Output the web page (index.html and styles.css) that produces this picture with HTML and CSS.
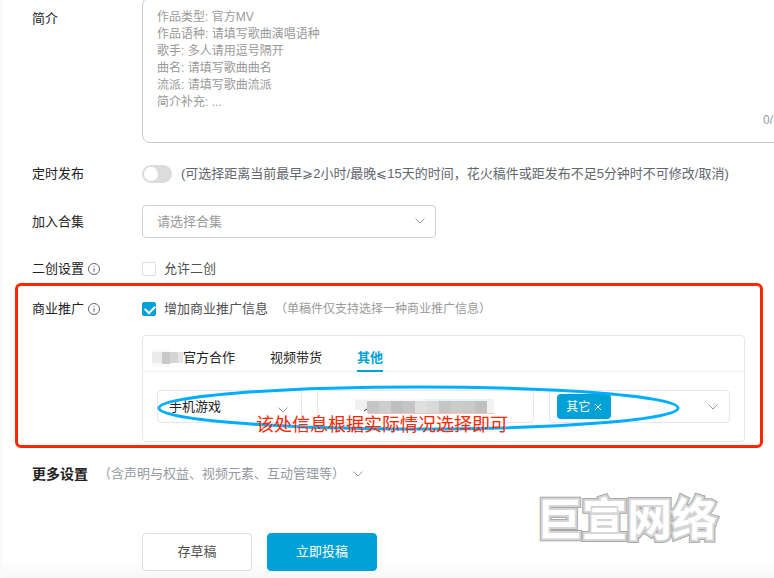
FILE: index.html
```html
<!DOCTYPE html>
<html lang="zh-CN">

<head>
  <meta charset="utf-8">
  <title>投稿</title>
  <link rel="stylesheet" href="styles.css">
</head>

<body>
  <main class="page">
    <form>
      <div class="row row-desc">
        <label class="label" for="desc">简介</label>
        <div class="desc">
          <textarea id="desc" class="desc-input" placeholder="作品类型: 官方MV&#10;作品语种: 请填写歌曲演唱语种&#10;歌手: 多人请用逗号隔开&#10;曲名: 请填写歌曲曲名&#10;流派: 请填写歌曲流派&#10;简介补充: ..."></textarea>
          <span class="desc-count">0/</span>
        </div>
      </div>

      <div class="row">
        <label class="label" for="timer">定时发布</label>
        <div class="line">
          <input class="switch" id="timer" type="checkbox">
          <span class="tip">(可选择距离当前最早⩾2小时/最晚⩽15天的时间，花火稿件或距发布不足5分钟时不可修改/取消)</span>
        </div>
      </div>

      <div class="row">
        <label class="label" for="season">加入合集</label>
        <div class="select-box season">
          <select class="select placeholder" id="season">
            <option>请选择合集</option>
          </select>
          <svg class="arrow" viewBox="0 0 10 6"><path d="M0.5 0.5L5 5L9.5 0.5"/></svg>
        </div>
      </div>

      <div class="row">
        <span class="label">二创设置
          <svg class="info" viewBox="0 0 12 12"><circle cx="6" cy="6" r="5.5"/><path d="M6 5.2V8.8M6 3.2V4.2"/></svg>
        </span>
        <div class="line">
          <input class="check" id="remix" type="checkbox">
          <label class="check-text" for="remix">允许二创</label>
        </div>
      </div>

      <section class="promo">
        <div class="row row-promo">
          <span class="label">商业推广
            <svg class="info" viewBox="0 0 12 12"><circle cx="6" cy="6" r="5.5"/><path d="M6 5.2V8.8M6 3.2V4.2"/></svg>
          </span>
          <div class="line">
            <input class="check" id="ad" type="checkbox" checked>
            <label class="check-text" for="ad">增加商业推广信息</label>
            <span class="hint">（单稿件仅支持选择一种商业推广信息）</span>
          </div>
        </div>

        <div class="panel">
          <div class="tabs">
            <button class="tab" type="button">
              <svg class="tab-mosaic" viewBox="0 0 31 18">
                <rect width="18" height="18" fill="#fafafa"/>
                <rect y="3" width="10" height="11" fill="#ececec"/>
                <rect x="10" y="3" width="8" height="12" fill="#c9c9c9"/>
                <rect x="18" y="3" width="8" height="11" fill="#d5d5d5"/>
                <rect x="26" y="3" width="5" height="11" fill="#e4e4e4"/>
              </svg>官方合作</button>
            <button class="tab" type="button">视频带货</button>
            <button class="tab active" type="button">其他</button>
          </div>
          <div class="fields">
            <div class="select-box">
              <select class="select select-type" aria-label="推广类型">
                <option>手机游戏</option>
              </select>
              <svg class="arrow arrow-type" viewBox="0 0 10 6"><path d="M0.5 0.5L5 5L9.5 0.5"/></svg>
            </div>
            <div class="select-box">
              <input class="field" type="text" aria-label="推广名称">
              <svg class="name-mosaic" viewBox="0 0 142 17">
                <path d="M0 0H80V2H0z" fill="#f7f7f7"/>
                <path d="M73 0H142V3H73z" fill="#e2f3fa"/>
                <rect x="3" y="1" width="12" height="10" fill="#f0f0f0"/>
                <path d="M12 12L15 10" stroke="#333"/>
                <rect x="15" y="2" width="12" height="12" fill="#c5c5c5"/>
                <rect x="27" y="2" width="12" height="12" fill="#cecece"/>
                <rect x="39" y="2" width="12" height="12" fill="#bfbfbf"/>
                <rect x="51" y="2" width="12" height="12" fill="#c4c4c4"/>
                <rect x="63" y="2" width="12" height="12" fill="#dedede"/>
                <rect x="75" y="2" width="12" height="12" fill="#d9d9d9"/>
                <rect x="87" y="2" width="12" height="12" fill="#c5c5c5"/>
                <rect x="99" y="2" width="12" height="12" fill="#cbcbcb"/>
                <rect x="111" y="2" width="12" height="12" fill="#c9c9c9"/>
                <rect x="123" y="2" width="12" height="12" fill="#c0c0c0"/>
                <rect x="135" y="2" width="7" height="12" fill="#f2f2f2"/>
                <path d="M16 14H142V15H16z" fill="#fbc0b6"/>
              </svg>
            </div>
            <div class="select-box tag-box">
              <button class="tag" type="button">其它
                <svg class="tag-close" viewBox="0 0 8 8"><path d="M1 1L7 7M7 1L1 7"/></svg>
              </button>
              <svg class="arrow" viewBox="0 0 10 6"><path d="M0.5 0.5L5 5L9.5 0.5"/></svg>
            </div>
            <svg class="mark-ring" viewBox="0 0 524 46" preserveAspectRatio="none"><ellipse cx="262" cy="23" rx="260" ry="21"/></svg>
            <span class="mark-text">该处信息根据实际情况选择即可</span>
          </div>
        </div>
        <div class="mark-frame"></div>
      </section>

      <div class="more">
        <h2 class="more-title">更多设置</h2>
        <span class="more-text">（含声明与权益、视频元素、互动管理等）</span>
        <svg class="more-arrow" viewBox="0 0 10 6"><path d="M0.5 0.5L5 5L9.5 0.5"/></svg>
      </div>

      <div class="actions">
        <button class="btn" type="button">存草稿</button>
        <button class="btn btn-primary" type="submit">立即投稿</button>
      </div>
    </form>

    <svg class="watermark" viewBox="0 0 200 70">
      <text id="brand" x="7" y="50">巨宣网络</text>
      <use class="wm-mid" href="#brand"/>
      <use class="wm-top" href="#brand"/>
    </svg>
  </main>
</body>

</html>
```

FILE: styles.css
```css
* {
  box-sizing: border-box;
}
body {
  margin: 0;
  overflow: hidden;
  background-color: #fff;
  font-family: "Liberation Sans", "Noto Sans CJK SC", sans-serif;
  font-size: 13px;
  line-height: 22px;
  color: #212121;
}
button, input, select, textarea {
  margin: 0;
  font: inherit;
  color: inherit;
  outline: none;
}
svg {
  fill: none;
  stroke: none;
}

/* the description box starts just above the fold */
.page {
  position: relative;
  margin-top: -3px;
  padding: 0 29px 7px;
  border-left: 3px solid #f9f9f9;
  overflow: hidden;
  background: linear-gradient(#fff, #f7f7f7) bottom / 100% 20px no-repeat;
}
.row {
  display: grid;
  grid-template-columns: 110px 1fr;
  align-items: center;
  margin-bottom: 20px;
}
.label {
  display: flex;
  align-items: center;
  gap: 4px;
  white-space: nowrap;
}
.line {
  display: flex;
  align-items: center;
  height: 22px;
  white-space: nowrap;
}
.info {
  width: 12px;
  height: 12px;
  stroke: #61666d;
}

/* description */
.row-desc {
  align-items: start;
}
.row-desc .label {
  padding-top: 11px;
}
.desc {
  position: relative;
  margin-right: -60px;
}
.desc-input {
  display: block;
  width: 100%;
  height: 146px;
  padding: 11px 14px;
  border: 1px solid #ccc;
  border-radius: 8px;
  resize: none;
  background-color: #fff;
  font-size: 12px;
  line-height: 17px;
}
.desc-input::placeholder {
  color: #999;
}
.desc-count {
  position: absolute;
  right: 32px;
  bottom: 12px;
  font-size: 12px;
  color: #9499a0;
}

/* switch and tick boxes */
.switch {
  appearance: none;
  width: 30px;
  height: 18px;
  padding: 2px;
  border-radius: 9px;
  background-color: #dcdcdc;
}
.switch::after {
  content: "";
  display: block;
  width: 14px;
  height: 14px;
  border-radius: 50%;
  background-color: #fff;
}
.tip {
  padding-left: 9px;
  color: #61666d;
}
.check {
  appearance: none;
  width: 14px;
  height: 14px;
  border: 1px solid #ddd;
  border-radius: 2px;
}
.check:checked {
  border-color: #00a1d6;
  background-color: #00a1d6;
}
.check:checked::after {
  content: "";
  display: block;
  width: 8px;
  height: 5px;
  margin: 2px;
  border-left: 2px solid #fff;
  border-bottom: 2px solid #fff;
  transform: rotate(-45deg);
}
.check-text {
  padding-left: 8px;
  color: #505050;
}
.hint {
  padding-left: 7px;
  font-size: 12px;
  color: #999;
}

/* selects */
.select-box {
  position: relative;
  height: 33px;
}
.season {
  width: 294px;
}
.select, .field, .tag-box {
  width: 100%;
  height: 33px;
  border: 1px solid #e7e7e7;
  border-radius: 4px;
  background-color: #fff;
}
.select {
  appearance: none;
  padding: 0 14px;
}
.placeholder {
  border-color: #ccd0d7;
  color: #999;
}
.select-type {
  padding-left: 11px;
}
.arrow, .more-arrow {
  width: 10px;
  height: 6px;
  stroke: #999;
}
.arrow {
  position: absolute;
  right: 11px;
  top: 13px;
}
.arrow-type {
  right: 14px;
  top: 17px;
}

/* promotion */
.promo {
  position: relative;
  margin-top: -2px;
  margin-bottom: 21px;
}
.row-promo {
  margin-bottom: 15px;
}
.panel {
  margin-left: 110px;
  border: 1px solid #e7e7e7;
  border-radius: 4px;
}
.tabs {
  display: flex;
  gap: 35px;
  height: 36px;
  padding-left: 9px;
  border-bottom: 1px solid #f1f1f1;
}
.tab {
  display: flex;
  align-items: center;
  height: 36px;
  padding: 11px 0 1px;
  border: 0;
  border-bottom: 2px solid transparent;
  background: none;
}
.tab.active {
  border-color: #00a1d6;
  color: #00a1d6;
  font-weight: 700;
}
.tab-mosaic {
  width: 31px;
  height: 18px;
}
.fields {
  position: relative;
  display: grid;
  grid-template-columns: 145fr 218fr 181fr;
  gap: 15px;
  margin: 18px 14px;
}
.name-mosaic {
  position: absolute;
  left: 35px;
  top: 9px;
  width: 142px;
  height: 17px;
}
.tag-box {
  padding: 3px 7px;
}
.tag {
  display: flex;
  align-items: center;
  gap: 4px;
  height: 25px;
  padding: 0 9px;
  border: 0;
  border-radius: 4px;
  background-color: #00a1d6;
  font-size: 12px;
  color: #fff;
}
.tag-close {
  width: 8px;
  height: 8px;
  stroke: #fff;
}

/* notes drawn over the form */
.mark-ring {
  position: absolute;
  left: 0;
  top: -5px;
  width: calc(100% - 50px);
  height: 46px;
  stroke: #00aeff;
  stroke-width: 3;
  pointer-events: none;
}
.mark-text {
  position: absolute;
  left: 99px;
  top: 23px;
  font-size: 18px;
  line-height: 24px;
  white-space: nowrap;
  color: #ff2600;
}
.mark-frame {
  position: absolute;
  inset: -15px -18px -6px -17px;
  border: 3px solid #ff2600;
  border-radius: 6px;
  pointer-events: none;
}

/* footer */
.more {
  display: flex;
  align-items: center;
}
.more-title {
  margin: 0;
  font-size: 14px;
  font-weight: 700;
}
.more-text {
  padding-left: 10px;
  color: #9499a0;
}
.more-arrow {
  margin-left: 8px;
}
.actions {
  display: flex;
  gap: 15px;
  margin-top: 48px;
  margin-left: 110px;
}
.btn {
  width: 110px;
  height: 38px;
  border: 1px solid #ddd;
  border-radius: 4px;
  background-color: #fff;
  color: #505050;
}
.btn-primary {
  border-color: #00a1d6;
  background-color: #00a1d6;
  color: #fff;
}
.watermark {
  position: absolute;
  right: 44px;
  bottom: 22px;
  width: 200px;
  height: 70px;
  overflow: visible;
  font-family: "Noto Sans CJK SC", sans-serif;
  font-size: 45px;
  font-weight: 700;
  stroke: #a8a8a8;
  stroke-width: 6;
}
.wm-mid {
  stroke: #d6d6d6;
  stroke-width: 4;
}
.wm-top {
  fill: #fff;
  stroke: none;
}
```
